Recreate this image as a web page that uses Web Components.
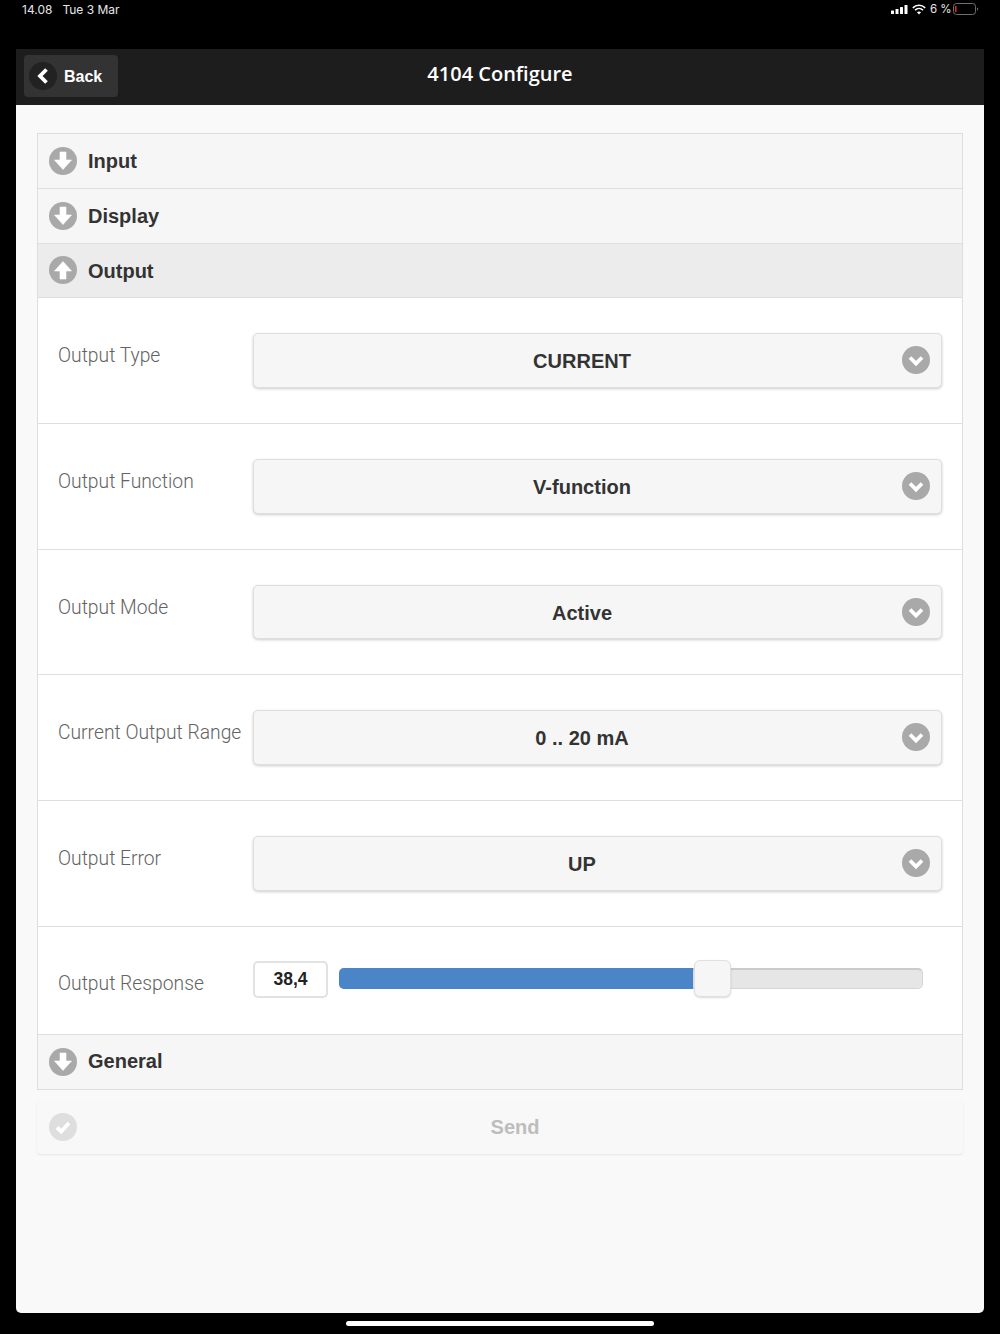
<!DOCTYPE html>
<html>
<head>
<meta charset="utf-8">
<title>4104 Configure</title>
<style>
  html, body { margin: 0; height: 100%; background: #000; }
  body { font-family: "Liberation Sans", Arial, sans-serif; overflow: hidden; }
</style>
</head>
<body>
<ipad-screen>
  <status-bar slot="status"></status-bar>
  <app-header slot="header" title="4104 Configure"></app-header>
  <config-accordion>
    <accordion-head icon="down">Input</accordion-head>
    <accordion-head icon="down">Display</accordion-head>
    <accordion-head icon="up" open>Output</accordion-head>
    <select-row label="Output Type" value="CURRENT"></select-row>
    <select-row label="Output Function" value="V-function"></select-row>
    <select-row label="Output Mode" value="Active"></select-row>
    <select-row label="Current Output Range" value="0 .. 20 mA"></select-row>
    <select-row label="Output Error" value="UP"></select-row>
    <slider-row label="Output Response" value="38,4" percent="60.9"></slider-row>
    <accordion-head icon="down" last>General</accordion-head>
  </config-accordion>
  <send-button>Send</send-button>
</ipad-screen>

<script>
const ICONS = {
  down: `<path d="M11 5h6v8h5.500L14 22.500 5.500 13H11z" fill="#fff" stroke="#fff" stroke-width=".6" stroke-linejoin="round"/>`,
  up: `<path d="M11 23h6v-8h5.500L14 5.500 5.500 15H11z" fill="#fff" stroke="#fff" stroke-width=".6" stroke-linejoin="round"/>`,
  chevron: `<path d="M8 11.500l6 6 6-6" fill="none" stroke="#fff" stroke-width="3.800"/>`,
  check: `<path d="M8 14.500l4.200 4L20 10" fill="none" stroke="#fff" stroke-width="3.800"/>`,
};

class RoundIcon extends HTMLElement {
  connectedCallback() {
    const name = this.getAttribute("name");
    this.attachShadow({ mode: "open" }).innerHTML = `
      <style>
        :host { display: block; width: 28px; height: 28px; flex: none; }
        svg { display: block; }
      </style>
      <svg width="28" height="28" viewBox="0 0 28 28">
        <circle cx="14" cy="14" r="14" fill="var(--icon-color, #a9a9a9)"/>
        ${ICONS[name]}
      </svg>`;
  }
}

class IpadScreen extends HTMLElement {
  constructor() {
    super();
    this.attachShadow({ mode: "open" }).innerHTML = `
      <style>
        :host { display: flex; flex-direction: column; height: 1334px; }
        .app {
          margin: 29px 16px 8px;
          flex: 1;
          display: flex;
          flex-direction: column;
          background: #f9f9f9;
          border-radius: 0 0 5px 5px;
          overflow: hidden;
        }
        .body { padding: 28px 21px 0; }
        .home {
          width: 308px;
          height: 5px;
          margin: 0 auto 8px;
          background: #fff;
          border-radius: 3px;
        }
      </style>
      <slot name="status"></slot>
      <div class="app">
        <slot name="header"></slot>
        <div class="body"><slot></slot></div>
      </div>
      <div class="home"></div>`;
  }
}

class StatusBar extends HTMLElement {
  constructor() {
    super();
    this.attachShadow({ mode: "open" }).innerHTML = `
      <style>
        :host {
          display: flex;
          justify-content: space-between;
          align-items: center;
          height: 18px;
          padding: 0 21px 2px 22px;
          color: #e6e6e6;
          font: 12px "Inter", "Liberation Sans", sans-serif;
        }
        .left { display: flex; gap: 10px; }
        .right { display: flex; align-items: center; gap: 4px; }
        .right span { width: 20px; margin-right: -1px; font-size: 11.500px; white-space: nowrap; }
        svg { display: block; }
      </style>
      <div class="left"><span>14.08</span><span>Tue 3 Mar</span></div>
      <div class="right">
        <svg width="17" height="9" viewBox="0 0 17 9" fill="#fff">
          <rect x="0" y="5.500" width="3" height="3.500" rx=".5"/>
          <rect x="4.500" y="4" width="3" height="5" rx=".5"/>
          <rect x="9" y="2" width="3" height="7" rx=".5"/>
          <rect x="13.500" y="0" width="3" height="9" rx=".5"/>
        </svg>
        <svg width="14" height="11" viewBox="0 0 14 11" fill="none" stroke="#fff" stroke-width="1.600">
          <path d="M.8 3.800C4.400.4 9.600.4 13.200 3.800"/>
          <path d="M3 6.100c2.300-2.100 5.700-2.100 8 0"/>
          <path d="M7 10.500L4.900 8.300c1.200-1 3-1 4.200 0z" fill="#fff" stroke="none"/>
        </svg>
        <span>6 %</span>
        <svg width="26" height="12" viewBox="0 0 26 12">
          <rect x=".5" y=".5" width="22" height="11" rx="3" fill="none" stroke="#6f6f6f"/>
          <rect x="2" y="3" width="1.500" height="6" fill="#d9302a"/>
          <path d="M24 4.500c.8.300 1.200.8 1.200 1.500s-.4 1.200-1.200 1.500z" fill="#6f6f6f"/>
        </svg>
      </div>`;
  }
}

class AppHeader extends HTMLElement {
  connectedCallback() {
    this.attachShadow({ mode: "open" }).innerHTML = `
      <style>
        :host {
          display: grid;
          grid-template-columns: 1fr auto 1fr;
          align-items: center;
          height: 56px;
          padding: 0 8px;
          background: #1d1d1d;
          color: #fff;
        }
        .back {
          justify-self: start;
          display: flex;
          align-items: center;
          gap: 7px;
          width: 94px;
          height: 42px;
          margin-bottom: 2px;
          box-sizing: border-box;
          padding-left: 5px;
          background: #333;
          border-radius: 4px;
          font-size: 16px;
          font-weight: bold;
        }
        .back span { margin-top: 2px; }
        .back svg { display: block; }
        h1 {
          margin: 0 0 7px;
          font: 600 20px "Open Sans", sans-serif;
          white-space: nowrap;
        }
      </style>
      <div class="back">
        <svg width="28" height="28" viewBox="0 0 28 28">
          <circle cx="14" cy="14" r="14" fill="#222"/>
          <path d="M17.500 7.500L11 14l6.500 6.500" fill="none" stroke="#fff" stroke-width="3.800"/>
        </svg>
        <span>Back</span>
      </div>
      <h1>${this.getAttribute("title")}</h1>
      <span></span>`;
  }
}

class ConfigAccordion extends HTMLElement {
  constructor() {
    super();
    this.attachShadow({ mode: "open" }).innerHTML = `
      <style>
        :host {
          display: block;
          border: 1px solid #dedede;
        }
      </style>
      <slot></slot>`;
  }
}

class AccordionHead extends HTMLElement {
  connectedCallback() {
    this.attachShadow({ mode: "open" }).innerHTML = `
      <style>
        :host {
          display: flex;
          align-items: center;
          gap: 11px;
          height: 53.800px;
          padding-left: 11px;
          background: #f6f6f6;
          border-bottom: 1px solid #dedede;
          color: #333;
          font-size: 20px;
          font-weight: bold;
        }
        :host([open]) { background: #ececec; }
        :host([last]) { border-bottom: 0; }
        .text { margin-top: 2px; }
        :host([last]) .text { margin-top: -1px; }
      </style>
      <round-icon name="${this.getAttribute("icon")}"></round-icon>
      <div class="text"><slot></slot></div>`;
  }
}

class SelectRow extends HTMLElement {
  connectedCallback() {
    this.attachShadow({ mode: "open" }).innerHTML = `
      <style>
        :host {
          display: grid;
          grid-template-columns: 195px 1fr;
          height: 124.700px;
          padding: 0 20px;
          background: #fff;
          border-bottom: 1px solid #dedede;
        }
        .label {
          padding-top: 43px;
          color: #636363;
          font: 300 19.300px/30px "Roboto", sans-serif;
          white-space: nowrap;
        }
        .select {
          position: relative;
          align-self: start;
          margin-top: 35px;
          height: 54.500px;
          box-sizing: border-box;
          display: flex;
          align-items: center;
          justify-content: center;
          padding-right: 31px;
          background: #f6f6f6;
          border: 1px solid #dedede;
          border-radius: 5px;
          box-shadow: 0 1px 3px rgba(0,0,0,.2);
          color: #333;
          font-size: 20px;
          font-weight: bold;
        }
        .select span { margin-top: 2px; }
        round-icon { position: absolute; right: 11px; top: 12px; }
      </style>
      <div class="label">${this.getAttribute("label")}</div>
      <div class="select">
        <span>${this.getAttribute("value")}</span>
        <round-icon name="chevron"></round-icon>
      </div>`;
  }
}

class SliderRow extends HTMLElement {
  connectedCallback() {
    const pct = this.getAttribute("percent");
    this.attachShadow({ mode: "open" }).innerHTML = `
      <style>
        :host {
          display: grid;
          grid-template-columns: 195px 1fr;
          height: 107px;
          padding: 0 20px;
          background: #fff;
          border-bottom: 1px solid #dedede;
        }
        .label {
          padding-top: 42px;
          color: #636363;
          font: 300 19.300px/30px "Roboto", sans-serif;
          white-space: nowrap;
        }
        .control {
          display: flex;
          align-items: center;
          gap: 11px;
          height: 37px;
          margin-top: 34px;
          padding-right: 19px;
        }
        .num {
          width: 75px;
          height: 37px;
          box-sizing: border-box;
          display: flex;
          align-items: center;
          justify-content: center;
          padding-top: 1px;
          background: #fff;
          border: 2px solid #e2e2e2;
          border-radius: 5px;
          color: #222;
          font-size: 17.500px;
          font-weight: bold;
        }
        .track {
          position: relative;
          flex: 1;
          height: 21px;
          margin-top: -2px;
          box-sizing: border-box;
          background: #e6e6e6;
          border: 1px solid #d6d6d6;
          border-top: 2px solid #cbcbcb;
          border-radius: 5px;
        }
        .fill {
          position: absolute;
          left: -1px;
          top: -2px;
          bottom: -1px;
          width: ${pct}%;
          background: #4a85c7;
          border-radius: 5px 0 0 5px;
        }
        .thumb {
          position: absolute;
          left: ${pct}%;
          top: -10px;
          width: 37px;
          height: 37px;
          box-sizing: border-box;
          background: #f6f6f6;
          border: 1px solid #e0e0e0;
          border-radius: 6px;
          box-shadow: 0 1px 2px rgba(0,0,0,.15);
        }
      </style>
      <div class="label">${this.getAttribute("label")}</div>
      <div class="control">
        <div class="num">${this.getAttribute("value")}</div>
        <div class="track"><div class="fill"></div><div class="thumb"></div></div>
      </div>`;
  }
}

class SendButton extends HTMLElement {
  constructor() {
    super();
    this.attachShadow({ mode: "open" }).innerHTML = `
      <style>
        :host {
          display: flex;
          align-items: center;
          height: 54px;
          margin-top: 10.500px;
          padding-left: 12px;
          background: #f8f8f8;
          border-radius: 4px;
          box-shadow: 0 1px 2px rgba(0,0,0,.08);
          color: #bdbdbd;
          font-size: 20px;
          font-weight: bold;
          --icon-color: #dedede;
        }
        .text { flex: 1; text-align: center; padding-right: 10px; }
      </style>
      <round-icon name="check"></round-icon>
      <div class="text"><slot></slot></div>`;
  }
}

customElements.define("round-icon", RoundIcon);
customElements.define("ipad-screen", IpadScreen);
customElements.define("status-bar", StatusBar);
customElements.define("app-header", AppHeader);
customElements.define("config-accordion", ConfigAccordion);
customElements.define("accordion-head", AccordionHead);
customElements.define("select-row", SelectRow);
customElements.define("slider-row", SliderRow);
customElements.define("send-button", SendButton);
</script>
</body>
</html>
